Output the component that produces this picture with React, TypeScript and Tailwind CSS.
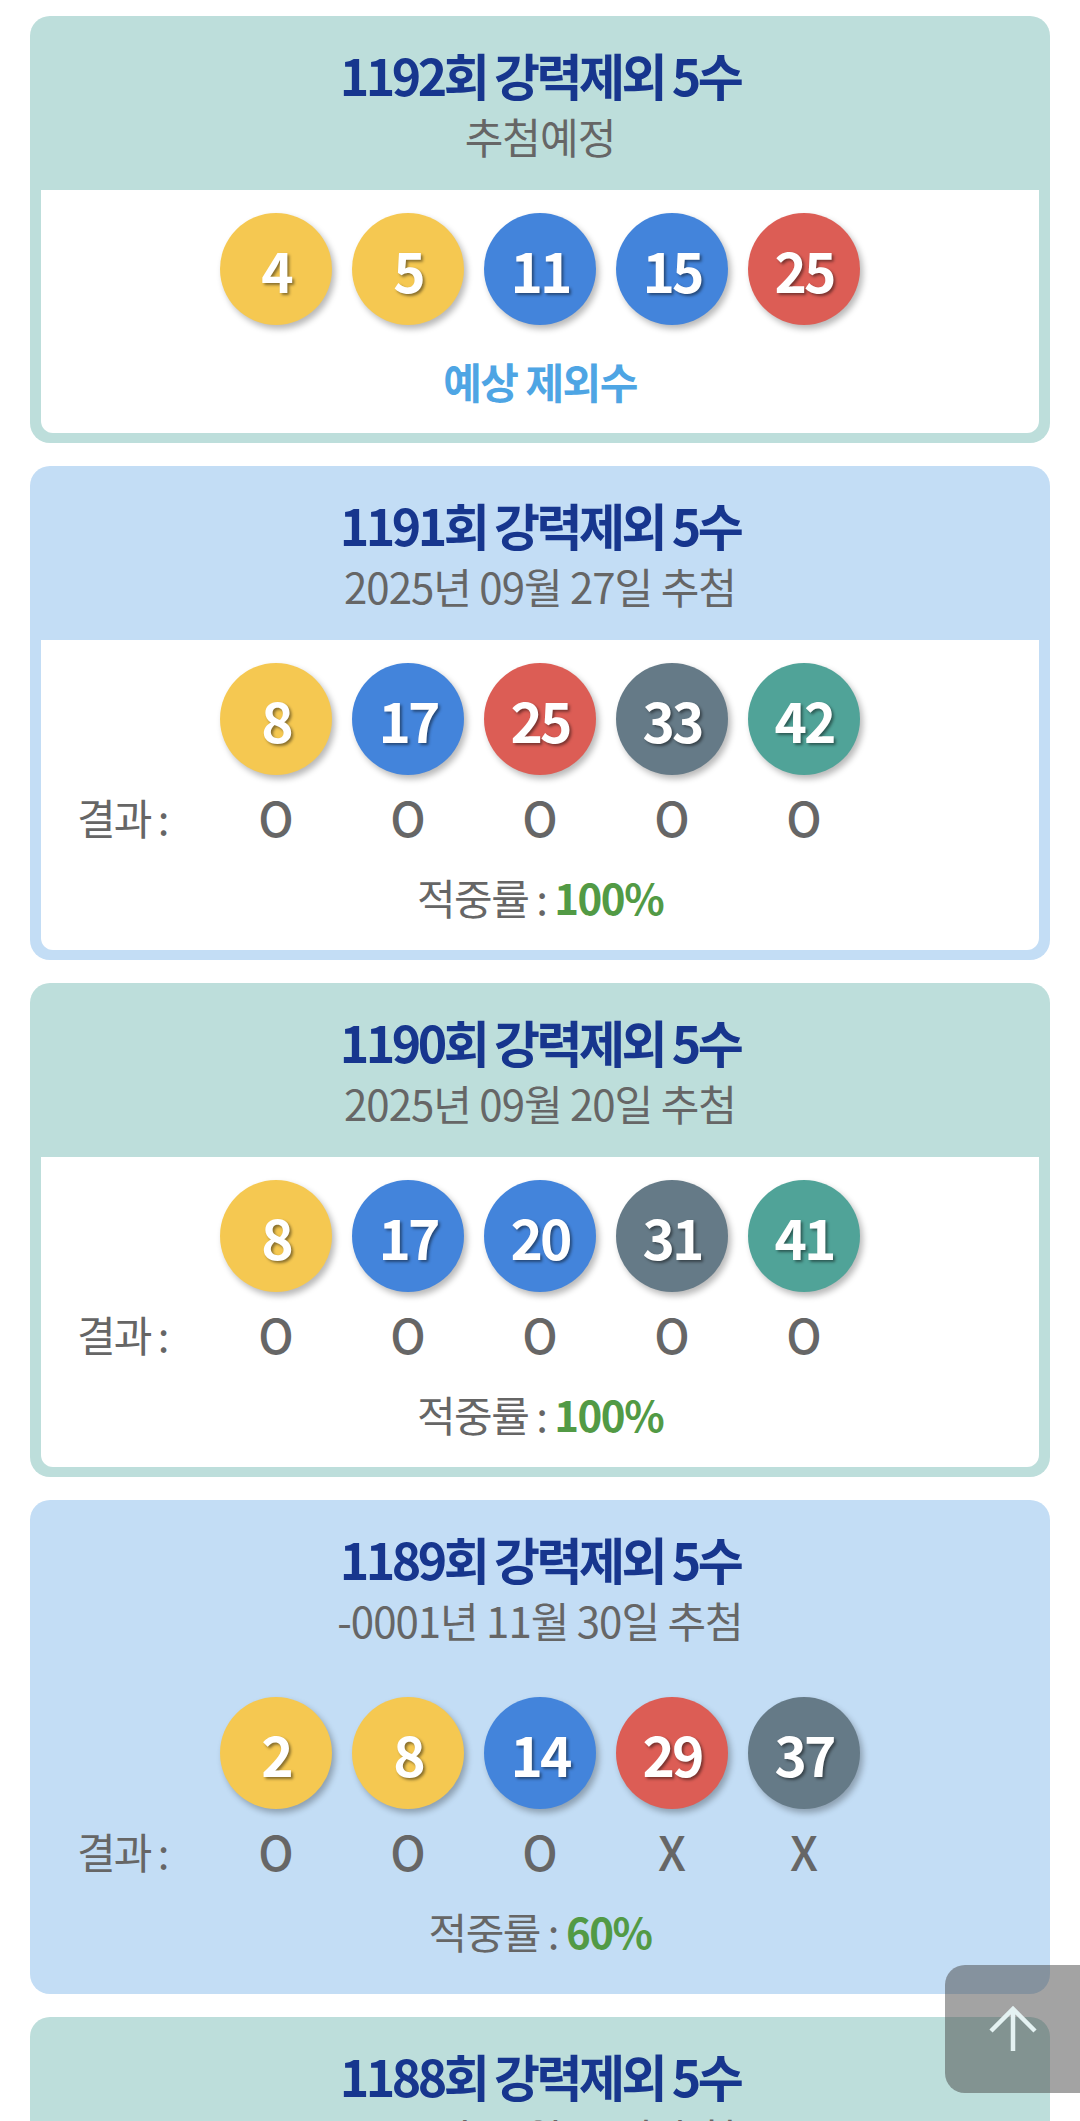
const ballColor = (n: number) => {
  if (n <= 10) return "bg-[#f5c851]";
  if (n <= 20) return "bg-[#4384db]";
  if (n <= 30) return "bg-[#dc5d55]";
  if (n <= 40) return "bg-[#657a87]";
  return "bg-[#50a398]";
};

type Round = {
  no: number;
  date: string;
  balls: number[];
  results?: string[];
  rate?: string;
  tone: "teal" | "blue";
  plain?: boolean;
};

const rounds: Round[] = [
  { no: 1192, date: "추첨예정", balls: [4, 5, 11, 15, 25], tone: "teal" },
  {
    no: 1191,
    date: "2025년 09월 27일 추첨",
    balls: [8, 17, 25, 33, 42],
    results: ["O", "O", "O", "O", "O"],
    rate: "100%",
    tone: "blue",
  },
  {
    no: 1190,
    date: "2025년 09월 20일 추첨",
    balls: [8, 17, 20, 31, 41],
    results: ["O", "O", "O", "O", "O"],
    rate: "100%",
    tone: "teal",
  },
  {
    no: 1189,
    date: "-0001년 11월 30일 추첨",
    balls: [2, 8, 14, 29, 37],
    results: ["O", "O", "O", "X", "X"],
    rate: "60%",
    tone: "blue",
    plain: true,
  },
  {
    no: 1188,
    date: "2025년 09월 06일 추첨",
    balls: [3, 9, 18, 27, 40],
    results: ["O", "O", "O", "O", "O"],
    rate: "100%",
    tone: "teal",
  },
];

const Ball = ({ n }: { n: number }) => (
  <div
    className={`flex h-[112px] w-[112px] items-center justify-center rounded-full text-[55px] font-bold tracking-[-3px] text-white shadow-[3px_4px_6px_rgba(0,0,0,0.28)] [text-shadow:2px_2px_3px_rgba(0,0,0,0.45)] ${ballColor(n)}`}
  >
    {n}
  </div>
);

const Card = ({ r }: { r: Round }) => (
  <div
    className={`mx-[30px] rounded-[20px] px-[11px] pb-[10px] ${
      r.tone === "teal" ? "bg-[#bddedb]" : "bg-[#c3ddf5]"
    }`}
  >
    <div className="flex h-[174px] flex-col items-center pt-[27px]">
      <div className="text-[50px] leading-[62px] font-bold tracking-[-3.5px] text-[#17368e]">
        {r.no}회 강력제외 5수
      </div>
      <div className="text-[42px] leading-[62px] tracking-[-1px] text-[#666]">
        {r.date}
      </div>
    </div>
    <div
      className={`rounded-b-[12px] pt-[23px] ${
        r.plain ? "" : "bg-white"
      } ${r.results ? "pb-[25px]" : "pb-[24px]"}`}
    >
      <div className="flex justify-center gap-[20px]">
        {r.balls.map((b) => (
          <Ball key={b} n={b} />
        ))}
      </div>
      {r.results ? (
        <>
          <div className="mt-[16px] grid grid-cols-[1fr_auto_1fr] items-center text-[#666]">
            <div className="pl-[36px] text-[42px] leading-[52px] tracking-[-2px]">
              결과 :
            </div>
            <div className="flex gap-[20px]">
              {r.results.map((x, i) => (
                <div
                  key={i}
                  className="w-[112px] text-center text-[47px] leading-[52px] font-medium"
                >
                  {x}
                </div>
              ))}
            </div>
            <div />
          </div>
          <div className="mt-[26px] text-center text-[42px] leading-[56px] tracking-[-1.5px] text-[#666]">
            적중률 : <span className="font-bold text-[#529a45]">{r.rate}</span>
          </div>
        </>
      ) : (
        <div className="mt-[28px] text-center text-[42px] leading-[56px] font-bold tracking-[-1.5px] text-[#4ea5e4]">
          예상 제외수
        </div>
      )}
    </div>
  </div>
);

export default function App() {
  return (
    <div className="h-[2121px] overflow-hidden bg-white pt-[16px] font-['Noto_Sans_CJK_KR','Noto_Sans',sans-serif]">
      <div className="flex flex-col gap-[23px]">
        {rounds.map((r) => (
          <Card key={r.no} r={r} />
        ))}
      </div>
      <button className="fixed right-0 bottom-[28px] flex h-[128px] w-[135px] items-center justify-center rounded-l-[20px] bg-[rgba(72,72,72,0.5)]">
        <svg width="50" height="50" viewBox="0 0 50 50" fill="none">
          <path
            d="M25 47V5M3 27L25 5L47 27"
            stroke="#e4f2f2"
            strokeWidth="4.5"
          />
        </svg>
      </button>
    </div>
  );
}
